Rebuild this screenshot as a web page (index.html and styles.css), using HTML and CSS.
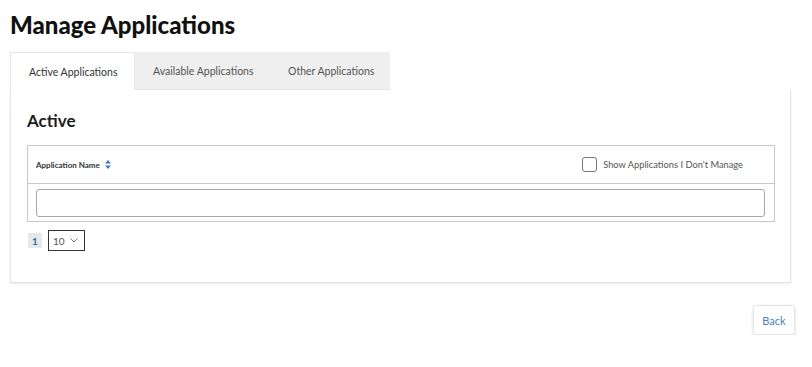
FILE: index.html
```html
<!DOCTYPE html>
<html lang="en">

<head>
    <meta charset="UTF-8">
    <meta name="viewport" content="width=device-width, initial-scale=1.0">
    <title>Manage Applications</title>
    <link rel="stylesheet" href="styles.css">
</head>

<body>
    <div class="page">
        <h1>Manage Applications</h1>

        <!-- Tabs -->
        <div class="tabs">
            <div class="tab active">Active Applications</div>
            <div class="tab">Available Applications</div>
            <div class="tab">Other Applications</div>
        </div>

        <div class="panel">
            <h2>Active</h2>

            <div class="grid">
                <div class="grid-head">
                    <span class="col-title">Application Name
                        <svg class="sort" width="6" height="9" viewBox="0 0 6 9">
                            <path d="M3 0 L6 3.5 H0 Z M0 5.5 H6 L3 9 Z" fill="#3a7cc4"/>
                        </svg>
                    </span>
                    <label class="check">
                        <span class="box"></span>
                        Show Applications I Don't Manage
                    </label>
                </div>
                <div class="grid-filter">
                    <input type="text" class="filter">
                </div>
            </div>

            <div class="pager">
                <span class="page-num">1</span>
                <div class="size">
                    <span>10</span>
                    <svg width="8" height="5" viewBox="0 0 8 5">
                        <path d="M0.5 0.5 L4 4 L7.5 0.5" fill="none" stroke="#777" stroke-width="1"/>
                    </svg>
                </div>
            </div>
        </div>

        <div class="actions">
            <button class="back">Back</button>
        </div>
    </div>
</body>

</html>
```

FILE: styles.css
```css
body {
    margin: 0;
    font-family: "Lato", "Open Sans", sans-serif;
    background-color: #FFFFFF;
    color: #222;
}

.page {
    padding: 10px 21px 0 10px;
}

h1 {
    margin: 0 0 12px 0;
    font-size: 24px;
    font-weight: 900;
    line-height: 30px;
    color: #111;
}

.tabs {
    display: flex;
    height: 38px;
}

.tab {
    display: flex;
    align-items: center;
    font-size: 10.5px;
    color: #555;
    background-color: #EFEFEF;
    border-bottom: 1px solid #E4E4E4;
    box-sizing: border-box;
}

.tab:nth-child(2) {
    width: 136px;
    padding-left: 18px;
}

.tab:nth-child(3) {
    width: 119px;
    padding-left: 17px;
}

.tab.active {
    width: 125px;
    padding-left: 18px;
    background-color: #FFFFFF;
    border: 1px solid #E8E8E8;
    border-bottom: none;
    color: #333;
}

.panel {
    border: 1px solid #E4E4E4;
    border-top: none;
    box-shadow: 0 1px 2px rgba(0, 0, 0, 0.08);
    padding: 20px 15px 27px 16px;
    height: 145px;
}

h2 {
    margin: 0 0 13px 0;
    font-size: 17px;
    font-weight: 700;
    line-height: 22px;
    color: #1b1b1b;
}

.grid {
    border: 1px solid #C8C8C8;
}

.grid-head {
    display: flex;
    align-items: center;
    justify-content: space-between;
    height: 37px;
    padding: 0 31px 0 8px;
    border-bottom: 1px solid #C8C8C8;
}

.col-title {
    font-size: 8px;
    font-weight: 700;
    color: #333;
    display: flex;
    align-items: center;
    gap: 5px;
}

.check {
    display: flex;
    align-items: center;
    gap: 6px;
    font-size: 9.3px;
    color: #555;
}

.check .box {
    width: 13px;
    height: 13px;
    border: 1px solid #777;
    border-radius: 3px;
}

.grid-filter {
    padding: 5px 9px 4px 8px;
}

.filter {
    display: block;
    width: 100%;
    height: 28px;
    box-sizing: border-box;
    border: 1px solid #A8A8A8;
    border-radius: 3px;
    margin: 0;
}

.pager {
    display: flex;
    align-items: center;
    gap: 6px;
    margin-top: 8px;
    padding-left: 1px;
}

.page-num {
    width: 14px;
    height: 15px;
    background-color: #E8E8E8;
    color: #2b6cb0;
    font-size: 10px;
    font-weight: 700;
    display: flex;
    align-items: center;
    justify-content: center;
}

.size {
    width: 37px;
    height: 21px;
    box-sizing: border-box;
    border: 1px solid #333;
    display: flex;
    align-items: center;
    justify-content: space-between;
    padding: 0 6px 0 4px;
    font-size: 10px;
    color: #555;
}

.actions {
    display: flex;
    justify-content: flex-end;
    margin-top: 22px;
    margin-right: -4px;
}

.back {
    width: 42px;
    height: 30px;
    font-family: inherit;
    font-size: 11px;
    color: #4a7fc9;
    background-color: #FFFFFF;
    border: 1px solid #E6E6E6;
    border-radius: 3px;
    box-shadow: 0 1px 3px rgba(0, 0, 0, 0.15);
    cursor: pointer;
}
```
